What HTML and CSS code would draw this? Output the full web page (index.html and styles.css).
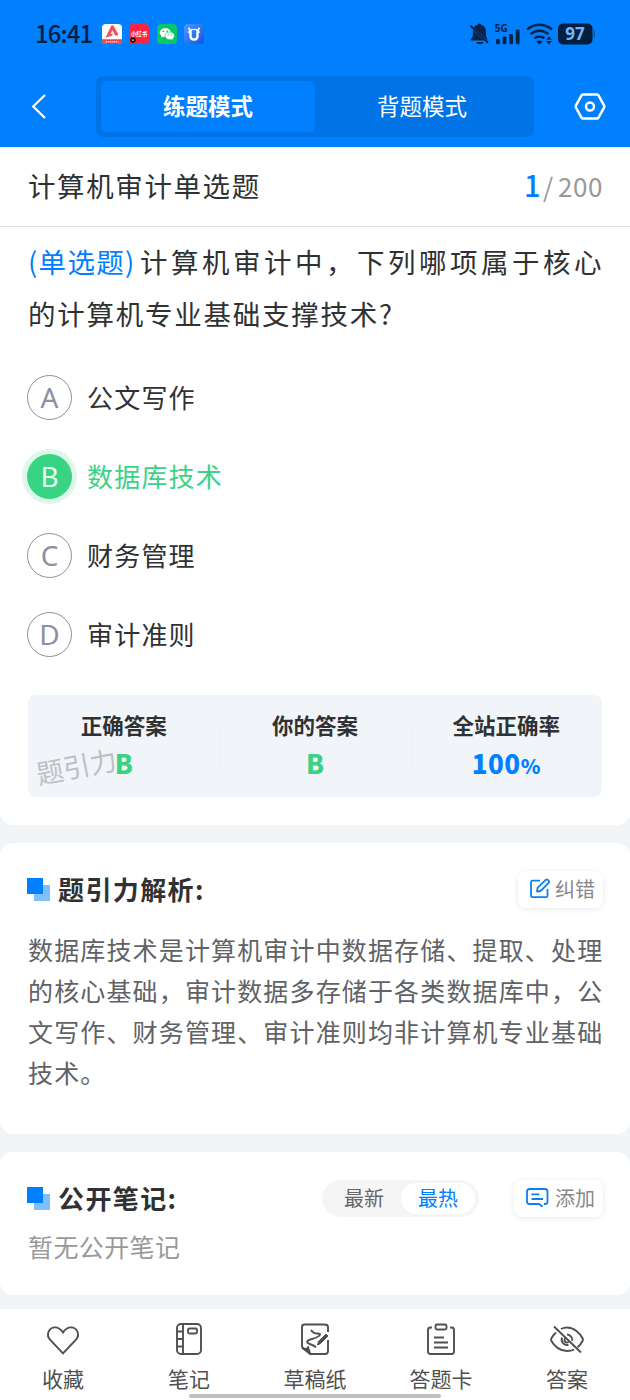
FILE: index.html
```html
<!DOCTYPE html>
<html lang="zh-CN">
<head>
<meta charset="utf-8">
<title>计算机审计单选题</title>
<link rel="stylesheet" href="styles.css">
</head>
<body>
<header class="top">
  <div class="status">
    <span class="clock">16:41</span>
    <div class="apps">
      <svg width="20" height="20" viewBox="0 0 20 20"><rect width="20" height="20" rx="4" fill="#fff"/><path d="M0 15.300h20V16a4 4 0 0 1-4 4H4a4 4 0 0 1-4-4z" fill="#e94250"/><path d="M9.300 1.500h2.200L16.500 11l-3.300.8-2.800-5.600-2 3.800 2.600-.6-1 2.400-6.500 2z" fill="#f0525c"/><path d="M3.500 17.800h13" stroke="#ffc0c2" stroke-width="1.400" stroke-dasharray="1.500 .5"/></svg>
      <svg width="20" height="20" viewBox="0 0 20 20"><rect width="20" height="20" rx="4" fill="#ff2442"/><text x="10" y="12.400" text-anchor="middle" class="red-label">小红书</text><circle cx="4" cy="16" r="2.700" fill="#1d100d"/><path d="M3 15.500h2v1.200H3z" fill="#f7c986"/></svg>
      <svg width="20" height="20" viewBox="0 0 20 20"><rect width="20" height="20" rx="4" fill="#07c768"/><path d="M8.300 4.200c-3.200 0-5.600 1.900-5.600 4.400 0 1.400.8 2.600 2 3.400l-.5 1.700 2-1q1 .3 2.100.3c3.200 0 5.600-2 5.600-4.400S11.500 4.200 8.300 4.200" fill="#fff"/><path d="M12.700 8c-2.700 0-4.700 1.700-4.700 3.800s2 3.900 4.700 3.900q.9 0 1.700-.3l1.700.9-.4-1.500a3.600 3.600 0 0 0 1.700-3c0-2.100-2-3.800-4.700-3.800" fill="#fff" stroke="#07c768" stroke-width=".6"/><g fill="#07b860"><circle cx="6.500" cy="7.400" r=".8"/><circle cx="10.200" cy="7.400" r=".8"/><circle cx="11.200" cy="10.800" r=".6"/><circle cx="14.200" cy="10.800" r=".6"/></g></svg>
      <svg width="20" height="20" viewBox="0 0 20 20"><defs><linearGradient id="ox" x2="1" y2="1"><stop stop-color="#4b9bff"/><stop offset="1" stop-color="#1252e6"/></linearGradient></defs><rect width="20" height="20" rx="4" fill="url(#ox)"/><g fill="none" stroke="#fff"><path d="M6.500 6v6q0 3.600 3.500 3.600t3.500-3.600V6" stroke-width="2.400"/><path d="M6.500 5.500h7" stroke-width="1.200"/><path d="M5 3.500q-.3 2.500 1.500 2.800M15 3.500q.3 2.500-1.500 2.800M3.800 8h2.500M13.700 8h2.500" stroke-width="1.500"/></g></svg>
    </div>
    <div class="signals">
      <svg width="126" height="26" viewBox="469 21 126 26" fill="#062247">
        <path d="M479.500 23.500c-1 0-1.600.7-1.600 1.300-2 .3-3.300 1.400-4 2.900l13.700 12.600-.6-2.300c-.8-1-1-2-1-3.500v-3.200c0-3.500-2-5.900-4.900-6.500 0-.6-.6-1.300-1.600-1.300M472.900 30v4.500c0 2-.5 3-2 4.500v1.500h13zM476 42h8q-1 2.200-4 2.200t-4-2.200"/>
        <path d="M470.500 25.800l17.500 17" stroke="#062247" stroke-width="1.900"/>
        <text x="494.800" y="32" class="five-g">5G</text>
        <g><rect x="496" y="39" width="3.800" height="5.300" rx="1.200"/><rect x="502.600" y="36.500" width="3.800" height="7.800" rx="1.200"/><rect x="509.200" y="34" width="3.800" height="10.300" rx="1.200"/><rect x="515.800" y="29.500" width="3.800" height="14.800" rx="1.200"/></g>
        <g fill="none" stroke="#062247" stroke-width="2.500"><path d="M527 29.500q12.500-9.500 25 0M530.500 34q9-6.800 18 0M534.500 38.300q5-3.600 10 0"/></g>
        <path d="M536.300 41.500q3.200-2.200 6.400 0l-3.200 3zM549 36.300l3 3.500h-6zM549 44.500l3-3.500h-6z"/>
        <rect x="558" y="23.500" width="34.500" height="21" rx="5" fill="#051e3d"/><path d="M593.500 29.500q1.500.8 1.500 2v5q0 1.200-1.500 2z" fill="#0757a8"/>
        <text x="575" y="40.200" text-anchor="middle" class="battery">97</text>
      </svg>
    </div>
  </div>
  <nav class="nav">
    <svg class="back" width="16" height="28" viewBox="0 0 16 28"><path d="M14 2L2.200 13.500 14 25" fill="none" stroke="#fff" stroke-width="2.200"/></svg>
    <div class="modes"><span class="mode on">练题模式</span><span class="mode">背题模式</span></div>
    <svg class="gear" width="32" height="30" viewBox="0 0 32 30"><path d="M9 2.500h14q1 0 1.500.9l5.500 10q.6 1.100 0 2.200l-5.500 10q-.5.900-1.500.9H9q-1 0-1.500-.9l-5.500-10q-.6-1.100 0-2.200l5.500-10q.5-.9 1.500-.9z" fill="none" stroke="#fff" stroke-width="2.500"/><circle cx="16" cy="14.500" r="4" fill="none" stroke="#fff" stroke-width="2.500"/></svg>
  </nav>
</header>

<main class="page">
  <section class="card question">
    <div class="heading"><h1 class="title">计算机审计单选题</h1><span class="count"><b class="now">1</b><i class="slash">/</i>200</span></div>
    <p class="stem"><span class="line first"><span class="kind">(单选题)</span>计算机审计中，下列哪项属于核心</span><span class="line">的计算机专业基础支撑技术?</span></p>
    <ul class="options">
      <li class="option"><span class="letter">A</span>公文写作</li>
      <li class="option right"><span class="letter">B</span>数据库技术</li>
      <li class="option"><span class="letter">C</span>财务管理</li>
      <li class="option"><span class="letter">D</span>审计准则</li>
    </ul>
    <div class="result">
      <span class="watermark">题引力</span>
      <div class="cell"><span>正确答案</span><strong class="good">B</strong></div>
      <div class="cell"><span>你的答案</span><strong class="good">B</strong></div>
      <div class="cell"><span>全站正确率</span><strong class="rate">100<small>%</small></strong></div>
    </div>
  </section>

  <section class="card analysis">
    <div class="bar"><i class="mark"></i><h2>题引力解析:</h2>
      <button class="chip fix"><svg width="22" height="22" viewBox="0 0 22 22" fill="none" stroke="#0a80f5" stroke-width="1.800"><path d="M11 2.700H3.500Q2 2.700 2 4.200v13.500q0 1.500 1.500 1.500H17q1.500 0 1.500-1.500V11M8 13.500l.5-3.600 8.200-8q1-.9 2 0l1 1q.9 1 0 2l-8.100 8.100z" stroke-linejoin="round"/></svg><span>纠错</span></button>
    </div>
    <p class="body"><span>数据库技术是计算机审计中数据存储、提取、处理</span><span>的核心基础，审计数据多存储于各类数据库中，公</span><span>文写作、财务管理、审计准则均非计算机专业基础</span><span>技术。</span></p>
  </section>

  <section class="card notes">
    <div class="bar"><i class="mark"></i><h2>公开笔记:</h2>
      <div class="sort"><span>最新</span><span class="hot">最热</span></div>
      <button class="chip add"><svg width="23" height="20" viewBox="0 0 23 20" fill="none" stroke="#0a80f5" stroke-width="1.800"><path d="M18 16h1q2.500 0 2.500-2.500v-10Q21.500 1 19 1H3.500Q1 1 1 3.500v10Q1 16 3.500 16H13l3.500 2.800M5.500 6.300h8M5.500 11h11.500"/></svg><span>添加</span></button>
    </div>
    <p class="empty">暂无公开笔记</p>
  </section>
</main>

<footer class="tabs">
  <div class="tab"><svg width="36" height="36" viewBox="0 0 36 36"><path d="M18 31.300L4.800 17.500C.5 12 4.500 5.400 10 5.400c4 0 6.200 2.300 8 5.100 1.800-2.800 4-5.100 8-5.100 5.500 0 9.500 6.600 5.200 12.100z"/></svg>收藏</div>
  <div class="tab"><svg width="36" height="36" viewBox="0 0 36 36"><rect x="6" y="2" width="24" height="30" rx="4"/><path d="M12 2v30M6 9.500h6M6 17h6M6 24.500h6"/><rect x="17" y="6.500" width="9" height="5" rx="1.500"/></svg>笔记</div>
  <div class="tab"><svg width="36" height="36" viewBox="0 0 36 36"><path d="M5 25V5q0-2.500 2.500-2.500h20Q31 2.500 31 5v5M31 18v11q0 3-3 3H13l-8-7"/><path d="M5 26q4 2 6-.5L13 31z" fill="#505050"/><path d="M14 8q2.500 4 7 3.500c5 .5 0 4-6 5.500s-6.500 3.500-1 5.500 4 2.500 5 3"/><path d="M20.500 23l1-3.500 7.500-7.500 2 2-7.500 7.500z" fill="#505050" stroke-width="1"/></svg>草稿纸</div>
  <div class="tab"><svg width="36" height="36" viewBox="0 0 36 36"><path d="M9 5.500H7.500Q5 5.500 5 8v21.500Q5 32 7.500 32h21q2.500 0 2.500-2.500V8q0-2.500-2.500-2.500H27M11 15.500h10M11 20.500h14M11 25.500h14"/><rect x="12.500" y="2.500" width="11" height="5" rx="1.500"/></svg>答题卡</div>
  <div class="tab"><svg width="36" height="36" viewBox="0 0 36 36"><path d="M7 10.500Q3.800 13.500 2.300 16.500q-.6 1.300 0 2.300C5 24 11 29 18 29q4 0 7.300-1.500M12 7Q14.800 5.500 18 5.500c7 0 13 5.500 15.700 11q.6 1.200 0 2.300-1.900 3.700-5 6.400M13 15.500a5.500 5.500 0 0 0 6.500 7.300M18 12.500a5.500 5.500 0 0 1 5.200 6.500M5 4.500l27 26M16 16.500a2.500 2.500 0 0 0 3.500 3.500"/></svg>答案</div>
  <i class="home"></i>
</footer>
</body>
</html>
```
FILE: styles.css
```css
* { box-sizing: border-box; }
body { margin: 0; width: 630px; height: 1400px; overflow: hidden; display: flex; flex-direction: column; background: #f1f5f8; color: #303133; font-family: "Noto Sans CJK SC", sans-serif; }
h1, h2, p, ul { margin: 0; padding: 0; font-weight: 400; }
i { font-style: normal; }
svg { display: block; flex: none; }

.top { height: 147px; flex: none; background: #0080ff; }
.status { height: 68px; display: flex; align-items: center; padding: 0 35px; }
.clock { width: 67px; font-size: 24px; font-weight: 500; letter-spacing: -.9px; color: #051e3d; line-height: 30px; padding-bottom: 2px; }
.apps { display: flex; gap: 7.300px; }
.red-label { font-size: 5.500px; font-weight: 700; fill: #fff; }
.signals { margin-left: auto; }
.five-g { font: 700 10px "Noto Sans", sans-serif; }
.battery { font: 700 17px "Noto Sans", sans-serif; fill: #6eb6ff; }
.nav { display: flex; align-items: center; padding: 8px 24px 0 31px; }
.modes { display: flex; width: 438px; height: 61px; margin-left: 49px; padding: 5px; background: #0073e6; border-radius: 7px; }
.mode { flex: 1; display: flex; align-items: center; justify-content: center; color: #fff; font-size: 22.500px; line-height: 30px; border-radius: 6px; padding-bottom: 3px; }
.mode.on { background: #0080ff; font-weight: 700; }
.gear { margin-left: auto; }

.page { flex: 1; display: flex; flex-direction: column; gap: 18px; }
.card { flex: none; background: #fff; border-radius: 13px; padding: 0 28px; }
.question { height: 678px; border-top-left-radius: 0; border-top-right-radius: 0; }
.heading { height: 80px; margin: 0 -28px; padding: 0 27px 3px 28px; display: flex; align-items: center; justify-content: space-between; border-bottom: 1px solid #dcdfe2; }
.title { font-size: 27.500px; letter-spacing: 1.600px; line-height: 40px; }
.count { display: flex; align-items: baseline; color: #999; font-size: 26px; letter-spacing: .6px; line-height: 40px; }
.now { color: #0080ff; font-size: 29px; font-weight: 500; }
.slash { margin: 0 4px 0 2px; }
.stem { padding-top: 8px; font-size: 27.500px; line-height: 52px; letter-spacing: 1.750px; white-space: nowrap; }
.line { display: block; }
.first { letter-spacing: 3.500px; }
.kind { display: inline-block; width: 112px; color: #0080ff; letter-spacing: 1.300px; }
.options { list-style: none; padding-top: 19px; }
.option { height: 79px; display: flex; align-items: center; font-size: 26px; letter-spacing: 1.200px; line-height: 40px; padding-bottom: 1px; }
.letter { width: 45px; height: 45px; margin: 0 15px 0 -1px; border: 1.500px solid #8d8fa5; border-radius: 50%; color: #8d8fa5; font: 28px "Noto Sans", sans-serif; line-height: 42px; text-align: center; letter-spacing: 0; }
.right { color: #3cd286; }
.right .letter { background: #38d383; border-color: #38d383; color: #e7fff2; box-shadow: 0 0 0 5px #def7ea; }
.result { position: relative; height: 102px; margin-top: 21px; display: flex; background: #f1f5f9; border-radius: 8px; padding-top: 13px; }
.cell { flex: 1; display: flex; flex-direction: column; align-items: center; font-size: 21.500px; font-weight: 700; line-height: 34px; }
.cell + .cell { background: linear-gradient(#e9eef2, #e9eef2) 0 20px / 1px 38px no-repeat; }
.cell strong { font-size: 26px; line-height: 42px; }
.good { color: #3cd286; }
.rate { color: #0080ff; letter-spacing: .5px; }
.rate small { font-size: 20px; }
.watermark { position: absolute; left: 8px; top: 52px; font-size: 27px; line-height: 38px; color: #bdbfc2; transform: rotate(-11deg); }

.analysis { height: 291px; padding-top: 25px; }
.bar { height: 42px; display: flex; align-items: center; }
.mark { width: 23px; height: 23px; margin-left: -1px; background: linear-gradient(#0080ff, #0080ff) 0 0 / 16px 16px no-repeat, linear-gradient(#80bfff, #80bfff) 100% 100% / 16px 16px no-repeat; }
.bar h2 { margin-left: 8px; font-size: 26px; font-weight: 700; letter-spacing: 1.400px; line-height: 40px; padding-bottom: 1px; }
.chip { margin: 0 -1px 0 auto; height: 37px; padding: 0 8px 0 11px; border: 0; border-radius: 8px; display: flex; align-items: center; gap: 4px; background: #fff; box-shadow: 0 1px 6px rgba(0,0,0,.09); color: #888; font: 20px "Noto Sans CJK SC", sans-serif; }
.chip span { padding-bottom: 2px; }
.chip.add { width: 89px; margin-left: 35px; padding-left: 12px; gap: 6px; }
.body { padding-top: 19px; font-size: 25px; letter-spacing: 1.150px; line-height: 41px; color: #606266; white-space: nowrap; }
.body span { display: block; }

.notes { height: 143px; padding-top: 25px; }
.sort { margin-left: auto; width: 157px; height: 37px; padding: 3px 4px 3px 5px; display: flex; border-radius: 19px; background: #f5f5f5; font-size: 20px; line-height: 30px; color: #666; text-align: center; }
.sort span { flex: 1; }
.sort .hot { background: #fff; color: #0080ff; border-radius: 16px; }
.empty { padding-top: 7px; font-size: 25px; letter-spacing: .4px; line-height: 40px; color: #999; }

.tabs { position: relative; flex: none; height: 91px; background: #fff; display: flex; }
.tab { flex: 1; display: flex; flex-direction: column; align-items: center; padding-top: 13px; font-size: 21px; line-height: 41px; color: #505050; }
.tab svg { fill: none; stroke: #505050; stroke-width: 1.900; }
.home { position: absolute; left: 189px; bottom: 2px; width: 252px; height: 4px; border-radius: 2px; background: #bfbfbf; }
```
